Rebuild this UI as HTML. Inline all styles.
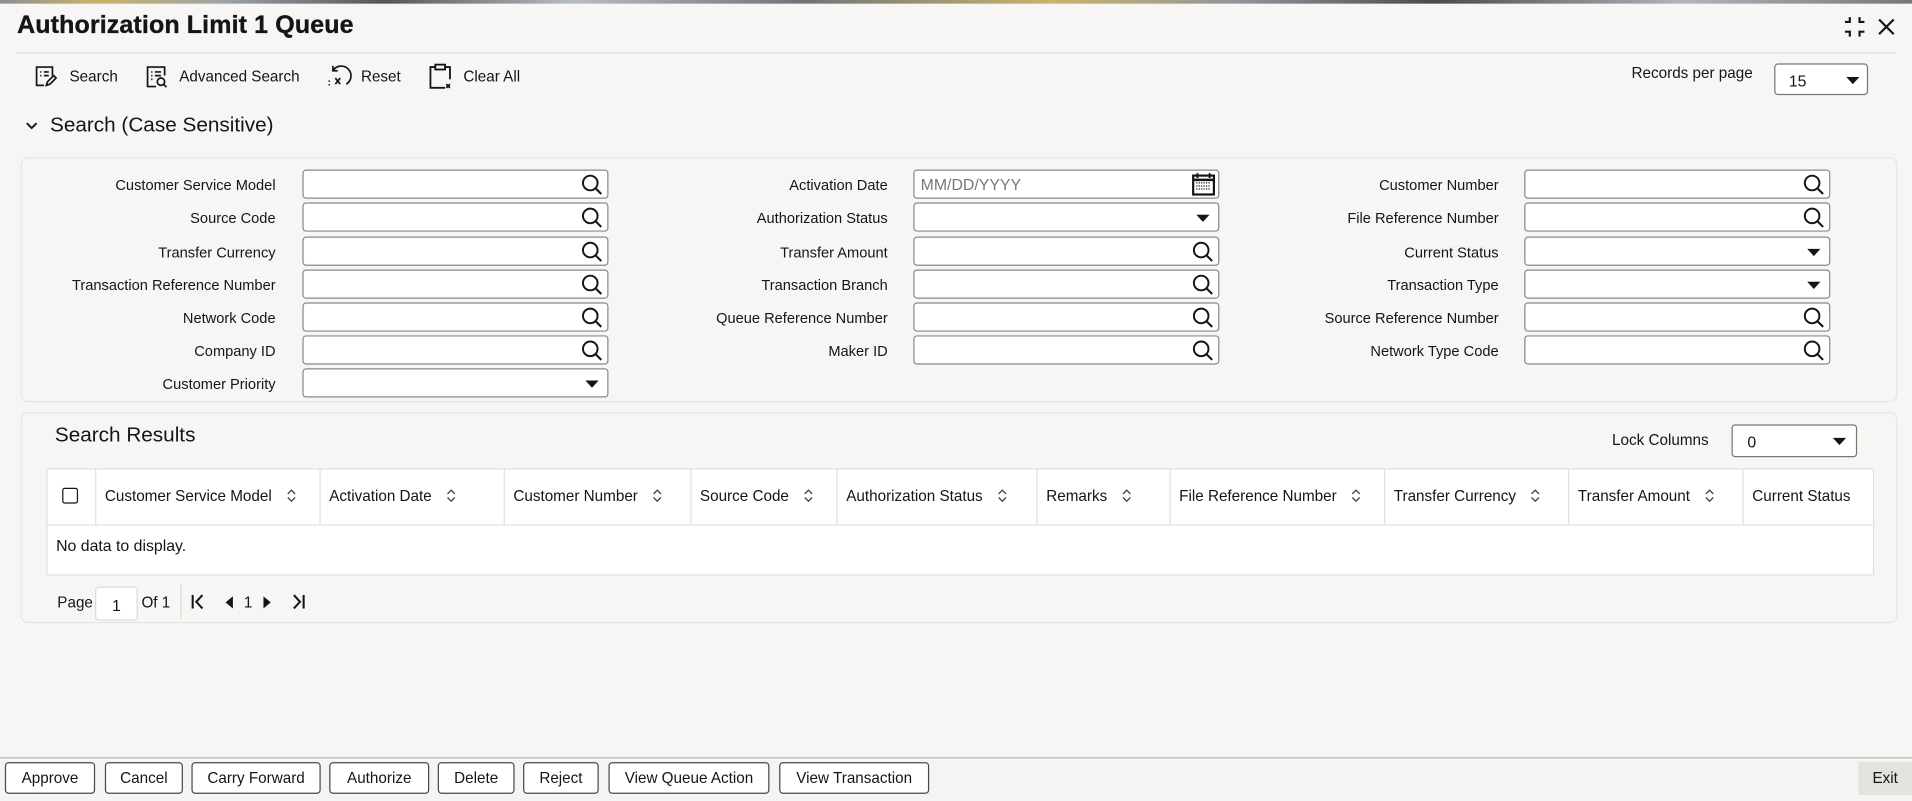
<!DOCTYPE html>
<html><head><meta charset="utf-8">
<style>
html,body{margin:0;padding:0;width:1912px;height:801px;overflow:hidden;background:#f7f6f5;}
#w{position:absolute;left:0;top:0;width:1568px;height:657px;transform:scale(1.21939);transform-origin:0 0;font-family:"Liberation Sans",sans-serif;color:#161513;font-size:12px;}
.a{position:absolute;}
.lbl{position:absolute;text-align:right;white-space:nowrap;font-size:12px;}
.in{position:absolute;height:24px;border:1px solid #8b8884;border-radius:3px;background:#fff;box-sizing:border-box;}
.ic{position:absolute;right:3px;top:2px;}
.btn{position:absolute;top:625px;height:26px;border:1px solid #4a4845;border-radius:3px;background:#fff;box-sizing:border-box;text-align:center;line-height:24px;font-size:12.5px;}
.th{position:absolute;top:384px;height:46px;line-height:46px;border-left:1px solid #e2e0dd;box-sizing:border-box;padding-left:7px;font-size:12.5px;white-space:nowrap;overflow:hidden;}
.sort{display:inline-block;margin-left:12px;vertical-align:-1px;}
</style></head><body><div id="w">
<div class="a" style="left:0;top:0;width:1568px;height:3px;background:linear-gradient(90deg,#8a8f96,#c9b36a 5%,#9aa1a8 12%,#555 20%,#b7bcc2 30%,#707478 42%,#c8b46b 55%,#8f949a 65%,#4b4b4b 75%,#b0b5bb 88%,#777 100%);"></div>
<div class="a" style="left:14px;top:9px;font-size:20.5px;font-weight:bold;letter-spacing:0.1px;-webkit-text-stroke:0.3px #161513;">Authorization Limit 1 Queue</div>
<svg class="a" style="left:1511px;top:12px" width="20" height="20" viewBox="0 0 20 20" fill="none" stroke="#161513" stroke-width="1.8"><path d="M2 6h4V2M14 2v4h4M2 14h4v4M18 14h-4v4"/></svg>
<svg class="a" style="left:1539px;top:14px" width="16" height="16" viewBox="0 0 16 16" stroke="#161513" stroke-width="1.8"><path d="M2 2L14 14M14 2L2 14"/></svg>
<div class="a" style="left:14px;top:43px;width:1540px;height:1px;background:#dedcd9;"></div>
<svg width="0" height="0" style="position:absolute"><defs>
<symbol id="mg" viewBox="0 0 20 20"><circle cx="8.5" cy="8.5" r="6.3" fill="none" stroke="#161513" stroke-width="1.7"/><path d="M13 13l5 5" stroke="#161513" stroke-width="1.8"/></symbol>
<symbol id="dd" viewBox="0 0 11 6"><path d="M0 0h11L5.5 6z" fill="#161513"/></symbol>
<symbol id="so" viewBox="0 0 8 11"><path d="M1 4l3-3 3 3M1 7l3 3 3-3" fill="none" stroke="#444" stroke-width="1.1"/></symbol>
</defs></svg>
<!-- toolbar -->
<svg class="a" style="left:27px;top:53px" width="20" height="20" viewBox="0 0 20 20" fill="none" stroke="#161513" stroke-width="1.4"><path d="M9 17H3V2h13v7"/><path d="M6 6h1M9 6h4M6 9h1M9 9h4"/><path d="M11 17l1-3 5-5 2 2-5 5z"/></svg>
<div class="a" style="left:57px;top:56px;font-size:12.5px;">Search</div>
<svg class="a" style="left:119px;top:53px" width="20" height="20" viewBox="0 0 20 20" fill="none" stroke="#161513" stroke-width="1.4"><path d="M9 18H2V2h14v7"/><path d="M5 6h1M8 6h5M5 9h1M8 9h5M5 12h1"/><circle cx="13" cy="14" r="3"/><path d="M15 16l2.5 2.5"/></svg>
<div class="a" style="left:147px;top:56px;font-size:12.5px;">Advanced Search</div>
<svg class="a" style="left:267px;top:53px" width="22" height="20" viewBox="0 0 22 20" fill="none" stroke="#161513" stroke-width="1.4"><path d="M6 5A8 8 0 1 1 17 16"/><path d="M6 1v4h4"/><path d="M8 11l4 5M12 11l-4 5"/><path d="M3 13v1M3 16v1"/></svg>
<div class="a" style="left:296px;top:56px;font-size:12.5px;">Reset</div>
<svg class="a" style="left:351px;top:52px" width="20" height="22" viewBox="0 0 20 22" fill="none" stroke="#161513" stroke-width="1.5"><path d="M6 3H2v17h12M14 3h4v10"/><rect x="6" y="1" width="8" height="4"/><path d="M15 17l3 3M18 17l-3 3"/></svg>
<div class="a" style="left:380px;top:56px;font-size:12.5px;">Clear All</div>
<div class="a" style="left:1338px;top:53px;font-size:12.5px;">Records per page</div>
<div class="in" style="left:1455px;top:52px;width:77px;height:26px;border-color:#7a7773;"><span class="a" style="left:11px;top:6px;font-size:13px;">15</span><svg class="a" style="right:6px;top:10px" width="11" height="6"><use href="#dd"/></svg></div>
<!-- search header -->
<svg class="a" style="left:20px;top:98px" width="12" height="10" viewBox="0 0 12 10" fill="none" stroke="#161513" stroke-width="1.6"><path d="M2 3l4 4 4-4"/></svg>
<div class="a" style="left:41px;top:93px;font-size:17px;">Search (Case Sensitive)</div>
<div class="a" style="left:17px;top:129px;width:1539px;height:201px;background:#f7f6f4;border:1px solid #e8e6e3;border-radius:6px;box-sizing:border-box;"></div>

<div class="lbl" style="right:1342px;top:145px;">Customer Service Model</div>
<div class="lbl" style="right:1342px;top:172px;">Source Code</div>
<div class="lbl" style="right:1342px;top:200px;">Transfer Currency</div>
<div class="lbl" style="right:1342px;top:227px;">Transaction Reference Number</div>
<div class="lbl" style="right:1342px;top:254px;">Network Code</div>
<div class="lbl" style="right:1342px;top:281px;">Company ID</div>
<div class="lbl" style="right:1342px;top:308px;">Customer Priority</div>
<div class="lbl" style="right:840px;top:145px;">Activation Date</div>
<div class="lbl" style="right:840px;top:172px;">Authorization Status</div>
<div class="lbl" style="right:840px;top:200px;">Transfer Amount</div>
<div class="lbl" style="right:840px;top:227px;">Transaction Branch</div>
<div class="lbl" style="right:840px;top:254px;">Queue Reference Number</div>
<div class="lbl" style="right:840px;top:281px;">Maker ID</div>
<div class="lbl" style="right:339px;top:145px;">Customer Number</div>
<div class="lbl" style="right:339px;top:172px;">File Reference Number</div>
<div class="lbl" style="right:339px;top:200px;">Current Status</div>
<div class="lbl" style="right:339px;top:227px;">Transaction Type</div>
<div class="lbl" style="right:339px;top:254px;">Source Reference Number</div>
<div class="lbl" style="right:339px;top:281px;">Network Type Code</div>

<div class="in" style="left:248px;top:139px;width:251px;"><svg class="ic" width="19" height="19"><use href="#mg"/></svg></div>
<div class="in" style="left:248px;top:166px;width:251px;"><svg class="ic" width="19" height="19"><use href="#mg"/></svg></div>
<div class="in" style="left:248px;top:194px;width:251px;"><svg class="ic" width="19" height="19"><use href="#mg"/></svg></div>
<div class="in" style="left:248px;top:221px;width:251px;"><svg class="ic" width="19" height="19"><use href="#mg"/></svg></div>
<div class="in" style="left:248px;top:248px;width:251px;"><svg class="ic" width="19" height="19"><use href="#mg"/></svg></div>
<div class="in" style="left:248px;top:275px;width:251px;"><svg class="ic" width="19" height="19"><use href="#mg"/></svg></div>
<div class="in" style="left:248px;top:302px;width:251px;"><svg class="a" style="right:7px;top:9px" width="11" height="6"><use href="#dd"/></svg></div>
<div class="in" style="left:749px;top:139px;width:251px;"><span class="a" style="left:5px;top:4px;font-size:13px;color:#7b7874;">MM/DD/YYYY</span>
<svg class="a" style="right:2px;top:1px" width="20" height="20" viewBox="0 0 20 20"><rect x="1.5" y="3" width="17" height="15.5" fill="none" stroke="#161513" stroke-width="1.8"/><path d="M1.5 6.5h17" stroke="#161513" stroke-width="2"/><path d="M5 1v4M15 1v4" stroke="#161513" stroke-width="1.6"/><path d="M4 9h12M4 11.5h12M4 14h12" stroke="#161513" stroke-width="1" stroke-dasharray="1 1"/></svg></div>
<div class="in" style="left:749px;top:166px;width:251px;"><svg class="a" style="right:7px;top:9px" width="11" height="6"><use href="#dd"/></svg></div>
<div class="in" style="left:749px;top:194px;width:251px;"><svg class="ic" width="19" height="19"><use href="#mg"/></svg></div>
<div class="in" style="left:749px;top:221px;width:251px;"><svg class="ic" width="19" height="19"><use href="#mg"/></svg></div>
<div class="in" style="left:749px;top:248px;width:251px;"><svg class="ic" width="19" height="19"><use href="#mg"/></svg></div>
<div class="in" style="left:749px;top:275px;width:251px;"><svg class="ic" width="19" height="19"><use href="#mg"/></svg></div>
<div class="in" style="left:1250px;top:139px;width:251px;"><svg class="ic" width="19" height="19"><use href="#mg"/></svg></div>
<div class="in" style="left:1250px;top:166px;width:251px;"><svg class="ic" width="19" height="19"><use href="#mg"/></svg></div>
<div class="in" style="left:1250px;top:194px;width:251px;"><svg class="a" style="right:7px;top:9px" width="11" height="6"><use href="#dd"/></svg></div>
<div class="in" style="left:1250px;top:221px;width:251px;"><svg class="a" style="right:7px;top:9px" width="11" height="6"><use href="#dd"/></svg></div>
<div class="in" style="left:1250px;top:248px;width:251px;"><svg class="ic" width="19" height="19"><use href="#mg"/></svg></div>
<div class="in" style="left:1250px;top:275px;width:251px;"><svg class="ic" width="19" height="19"><use href="#mg"/></svg></div>

<!-- results -->
<div class="a" style="left:17px;top:338px;width:1539px;height:173px;background:#f7f6f4;border:1px solid #e8e6e3;border-radius:6px;box-sizing:border-box;"></div>
<div class="a" style="left:45px;top:347px;font-size:17px;">Search Results</div>
<div class="a" style="left:1322px;top:354px;font-size:12.5px;">Lock Columns</div>
<div class="in" style="left:1420px;top:348px;width:103px;height:27px;border-color:#7a7773;"><span class="a" style="left:12px;top:6px;font-size:13px;">0</span><svg class="a" style="right:8px;top:10px" width="11" height="6"><use href="#dd"/></svg></div>
<div class="a" style="left:38px;top:384px;width:1499px;height:88px;background:#fff;border:1px solid #e2e0dd;box-sizing:border-box;"></div>
<div class="a" style="left:38px;top:430px;width:1499px;height:1px;background:#e2e0dd;"></div>
<div class="a" style="left:51px;top:400px;width:13px;height:13px;border:1.5px solid #161513;border-radius:2px;box-sizing:border-box;"></div>
<div class="th" style="left:78px;width:184px;">Customer Service Model<svg class="sort" width="8" height="11"><use href="#so"/></svg></div>
<div class="th" style="left:262px;width:151px;">Activation Date<svg class="sort" width="8" height="11"><use href="#so"/></svg></div>
<div class="th" style="left:413px;width:153px;">Customer Number<svg class="sort" width="8" height="11"><use href="#so"/></svg></div>
<div class="th" style="left:566px;width:120px;">Source Code<svg class="sort" width="8" height="11"><use href="#so"/></svg></div>
<div class="th" style="left:686px;width:164px;">Authorization Status<svg class="sort" width="8" height="11"><use href="#so"/></svg></div>
<div class="th" style="left:850px;width:109px;">Remarks<svg class="sort" width="8" height="11"><use href="#so"/></svg></div>
<div class="th" style="left:959px;width:176px;">File Reference Number<svg class="sort" width="8" height="11"><use href="#so"/></svg></div>
<div class="th" style="left:1135px;width:151px;">Transfer Currency<svg class="sort" width="8" height="11"><use href="#so"/></svg></div>
<div class="th" style="left:1286px;width:143px;">Transfer Amount<svg class="sort" width="8" height="11"><use href="#so"/></svg></div>
<div class="th" style="left:1429px;width:107px;">Current Status</div>
<div class="a" style="left:46px;top:440px;font-size:13px;">No data to display.</div>
<div class="a" style="left:47px;top:487px;font-size:12.5px;">Page</div>
<div class="a" style="left:78px;top:481px;width:35px;height:28px;border:1px solid #dcdad7;border-radius:3px;background:#fff;box-sizing:border-box;text-align:center;line-height:30px;font-size:13px;">1</div>
<div class="a" style="left:116px;top:487px;font-size:12.5px;">Of 1</div>
<div class="a" style="left:148px;top:479px;width:1px;height:28px;background:#dcdad7;"></div>
<svg class="a" style="left:156px;top:487px" width="13" height="13" viewBox="0 0 13 13" fill="none" stroke="#161513" stroke-width="1.7"><path d="M2 1v11M10 1L5 6.5 10 12"/></svg>
<svg class="a" style="left:185px;top:489px" width="7" height="10"><path d="M6 0v10L0 5z" fill="#161513"/></svg>
<div class="a" style="left:200px;top:487px;font-size:12.5px;">1</div>
<svg class="a" style="left:216px;top:489px" width="7" height="10"><path d="M0 0v10l6-5z" fill="#161513"/></svg>
<svg class="a" style="left:238px;top:487px" width="13" height="13" viewBox="0 0 13 13" fill="none" stroke="#161513" stroke-width="1.7"><path d="M11 1v11M3 1l5 5.5L3 12"/></svg>

<!-- bottom bar -->
<div class="a" style="left:0;top:621px;width:1568px;height:1px;background:#b9b6b2;"></div>
<div class="a" style="left:0;top:622px;width:1568px;height:35px;background:#f5f4f2;"></div>
<div class="btn" style="left:4px;width:74px;">Approve</div>
<div class="btn" style="left:86px;width:64px;">Cancel</div>
<div class="btn" style="left:157px;width:106px;">Carry Forward</div>
<div class="btn" style="left:270px;width:82px;">Authorize</div>
<div class="btn" style="left:359px;width:63px;">Delete</div>
<div class="btn" style="left:429px;width:62px;">Reject</div>
<div class="btn" style="left:499px;width:132px;">View Queue Action</div>
<div class="btn" style="left:639px;width:123px;">View Transaction</div>
<div class="a" style="left:1524px;top:625px;width:44px;height:27px;background:#e4e2df;text-align:center;line-height:27px;font-size:12.5px;">Exit</div>
</div></body></html>
